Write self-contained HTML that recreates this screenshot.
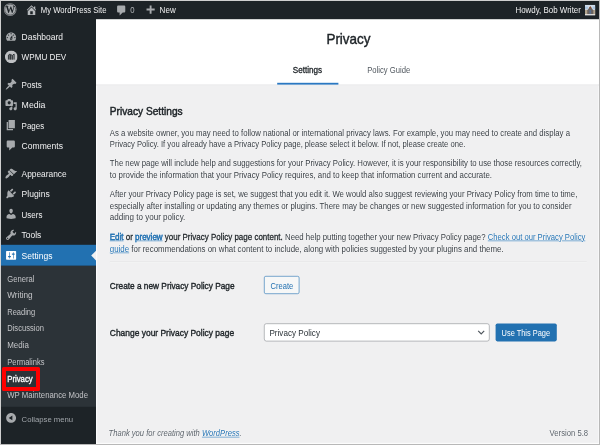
<!DOCTYPE html>
<html lang="en">
<head>
<meta charset="utf-8">
<title>Privacy ‹ My WordPress Site — WordPress</title>
<style>
*{box-sizing:border-box;margin:0;padding:0}
html,body{width:600px;height:445px;overflow:hidden;background:#f0f0f1}
body{font-family:"Liberation Sans",sans-serif;position:relative}
#wp{position:absolute;left:0;top:0;width:1000px;height:742px;transform:scale(.6);transform-origin:0 0;background:#f0f0f1;color:#3c434a;font-size:13px;overflow:hidden}
#wp div,#wp svg{position:absolute}
.t{position:absolute;white-space:nowrap;line-height:0;transform-origin:0 50%;font-weight:normal;text-decoration:none}
ul,li{list-style:none}
#content{left:0;top:0;width:1000px;height:742px}
#content p .t,#content h2,#content label,#content footer .t{text-shadow:0 0 1.6px #fff,0 0 1.6px #fff}
.t a{color:#2271b1;text-decoration:underline}
.t b{font-weight:normal;-webkit-text-stroke:0.45px;color:#1d2327}
.t b a{color:#2271b1}
#menu{left:0;top:0;width:160px;height:742px;background:#1d2327}
#bar{left:0;top:0;width:1000px;height:32px;background:#1d2327}
#cur{left:0;top:408px;width:160px;height:34.5px;background:#2271b1}
#arr{left:144px;top:417.5px;width:0;height:0;border:8px solid transparent;border-right-color:#f0f0f1}
#sub{left:0;top:442.5px;width:160px;height:235.5px;background:#2c3338}
#head{left:0;top:0;width:1000px;height:142.2px;background:#fff;border-bottom:1px solid #dcdcde}
#ul{left:461.7px;top:137.5px;width:102.8px;height:3.5px;background:#2a78c2}
#hr{left:183px;top:436.2px;width:795px;height:2px;border-top:1px solid #dfdfe1;border-bottom:1px solid #f6f7f7}
#btn1{left:440.3px;top:459.7px;width:58.4px;height:30.6px;border:1px solid #2271b1;border-radius:3px;background:#f6f7f7}
#btn2{left:826.3px;top:538.7px;width:101.5px;height:30px;border-radius:3px;background:#2271b1}
#se{left:440.3px;top:538.7px;width:375.8px;height:30.5px;border:1px solid #8c8f94;border-radius:4px;background:#fff}
#r1{left:160px;top:142.5px;width:1.6px;height:600px;background:rgba(255,255,255,.75)}
#r2{left:160px;top:738.2px;width:840px;height:1.7px;background:rgba(255,255,255,.8)}
#r3{left:996.6px;top:142.5px;width:1.7px;height:600px;background:rgba(255,255,255,.8)}
#hl{position:absolute;left:2.2px;top:366.5px;width:37.8px;height:24.3px;border:4px solid #f00;border-radius:1.5px;z-index:40}
#frame{position:absolute;left:0;top:0;width:600px;height:445px;border:1px solid #cfcfcf;border-right-color:#b8b8b8;border-bottom-color:#b8b8b8;z-index:50}
</style>
</head>
<body>
<div id="wp">
<div id="content" role="main">
 <div id="head">
  <h1 class="t" id="h1" style="left:543.78px;top:65.33px;font-size:23.92px;color:#1d2327;-webkit-text-stroke:0.72px;transform:scaleX(0.9391);">Privacy</h1>
  <div id="ul"></div>
  <nav>
   <a class="t" id="t1" style="left:488.42px;top:117.17px;font-size:13.91px;color:#1d2327;-webkit-text-stroke:0.50px;transform:scaleX(0.9685);">Settings</a>
   <a class="t" id="t2" style="left:612.08px;top:117.17px;font-size:13.91px;color:#50575e;transform:scaleX(0.9179);">Policy Guide</a>
  </nav>
 </div>
 <div id="r1"></div>
 <div id="r2"></div>
 <div id="r3"></div>
 <h2 class="t" id="h2" style="left:183.29px;top:186.17px;font-size:18.02px;color:#1d2327;-webkit-text-stroke:0.83px;transform:scaleX(0.9399);">Privacy Settings</h2>
 <p>
  <span class="t" id="p0" style="left:182.92px;top:222.17px;font-size:13.91px;color:#343a40;transform:scaleX(0.9334);">As a website owner, you may need to follow national or international privacy laws. For example, you may need to create and display a</span>
  <span class="t" id="p1" style="left:182.92px;top:239.67px;font-size:13.91px;color:#343a40;transform:scaleX(0.9151);">Privacy Policy. If you already have a Privacy Policy page, please select it below. If not, please create one.</span>
 </p>
 <p>
  <span class="t" id="p2" style="left:182.92px;top:272.17px;font-size:13.91px;color:#343a40;transform:scaleX(0.9321);">The new page will include help and suggestions for your Privacy Policy. However, it is your responsibility to use those resources correctly,</span>
  <span class="t" id="p3" style="left:182.92px;top:292.17px;font-size:13.91px;color:#343a40;transform:scaleX(0.9440);">to provide the information that your Privacy Policy requires, and to keep that information current and accurate.</span>
 </p>
 <p>
  <span class="t" id="p4" style="left:182.92px;top:323.83px;font-size:13.91px;color:#343a40;transform:scaleX(0.9320);">After your Privacy Policy page is set, we suggest that you edit it. We would also suggest reviewing your Privacy Policy from time to time,</span>
  <span class="t" id="p5" style="left:182.92px;top:343.83px;font-size:13.91px;color:#343a40;transform:scaleX(0.9405);">especially after installing or updating any themes or plugins. There may be changes or new suggested information for you to consider</span>
  <span class="t" id="p6" style="left:182.92px;top:362.17px;font-size:13.91px;color:#343a40;transform:scaleX(0.9651);">adding to your policy.</span>
 </p>
 <p>
  <span class="t" id="q1" style="left:182.92px;top:394.67px;font-size:13.91px;color:#343a40;transform:scaleX(0.9564);"><b><a>Edit</a> or <a>preview</a> your Privacy Policy page content.</b></span>
  <span class="t" id="q2" style="left:475.08px;top:394.67px;font-size:13.91px;color:#343a40;transform:scaleX(0.9356);">Need help putting together your new Privacy Policy page?</span>
  <span class="t" id="q3" style="left:812.92px;top:394.67px;font-size:13.91px;color:#343a40;transform:scaleX(0.9181);"><a>Check out our Privacy Policy</a></span>
  <span class="t" id="p7" style="left:182.92px;top:414.67px;font-size:13.91px;color:#343a40;transform:scaleX(0.9465);"><a>guide</a> for recommendations on what content to include, along with policies suggested by your plugins and theme.</span>
 </p>
 <div id="hr"></div>
 <form>
  <label class="t" id="l1" style="left:182.88px;top:476.67px;font-size:14.98px;color:#1d2327;-webkit-text-stroke:0.67px;transform:scaleX(0.9221);">Create a new Privacy Policy Page</label>
  <div id="btn1" class="button"></div>
  <span class="t" id="bt1" style="left:450.92px;top:477.17px;font-size:13.91px;color:#2271b1;transform:scaleX(0.9062);">Create</span>
  <label class="t" id="l2" style="left:182.88px;top:555.00px;font-size:14.98px;color:#1d2327;-webkit-text-stroke:0.67px;transform:scaleX(0.9398);">Change your Privacy Policy page</label>
  <div id="se" class="select"></div>
  <span class="t" id="sel" style="left:449.05px;top:555.00px;font-size:14.98px;color:#2c3338;transform:scaleX(0.9041);">Privacy Policy</span>
  <svg style="left:795px;top:549px" width="14" height="10" viewBox="0 0 14 10"><path d="M2 2.500l5 5 5-5" fill="none" stroke="#50575e" stroke-width="2"/></svg>
  <div id="btn2" class="button"></div>
  <span class="t" id="bt2" style="left:836.25px;top:554.67px;font-size:13.91px;color:#fff;transform:scaleX(0.8886);">Use This Page</span>
 </form>
 <footer>
  <p class="t" id="f1" style="left:180.92px;top:722.17px;font-size:13.91px;color:#596068;font-style:italic;transform:scaleX(0.9104);">Thank you for creating with <a>WordPress</a>.</p>
  <p class="t" id="f2" style="left:916.25px;top:722.17px;font-size:13.91px;color:#596068;transform:scaleX(0.9220);">Version 5.8</p>
 </footer>
</div>
<div id="menu" role="navigation">
 <div id="cur"></div>
 <div id="arr"></div>
 <div id="sub"></div>
 <ul>
  <li><svg style="position:absolute;left:8px;top:50.6667px" width="21" height="21" viewBox="0 0 20 20"><path fill="#a7aaad" fill-rule="evenodd" d="M3.76 16h12.48c1.1-1.37 1.76-3.11 1.76-5 0-4.42-3.58-8-8-8s-8 3.58-8 8c0 1.89.66 3.63 1.76 5zM10 4c.55 0 1 .45 1 1s-.45 1-1 1-1-.45-1-1 .45-1 1-1zM6 6c.55 0 1 .45 1 1s-.45 1-1 1-1-.45-1-1 .45-1 1-1zm8 0c.55 0 1 .45 1 1s-.45 1-1 1-1-.45-1-1 .45-1 1-1zm-5.37 5.55L12 7v6c0 1.1-.9 2-2 2s-2-.9-2-2c0-.57.24-1.08.63-1.45zM4 10c.55 0 1 .45 1 1s-.45 1-1 1-1-.45-1-1 .45-1 1-1zm12 0c.55 0 1 .45 1 1s-.45 1-1 1-1-.45-1-1 .45-1 1-1zm-5 3c0-.55-.45-1-1-1s-1 .45-1 1 .45 1 1 1 1-.45 1-1z"/></svg><a class="t" id="m0" style="left:35.70px;top:61.67px;font-size:15.68px;color:#f0f0f1;transform:scaleX(0.8992);">Dashboard</a></li>
  <li><svg style="left:7.5px;top:83.9px" width="21.6" height="21.6" viewBox="0 0 20 20"><circle cx="10" cy="10" r="9.8" fill="#bfc1c4"/><path d="M5.600 14.200V7.200l2.200-1.500v8.500M8.900 14.200V6.200l2.200 1.500v6.500M12.200 14.200V7.200l2.200-1.500v8.500" fill="none" stroke="#2a2f34" stroke-width="1.500"/></svg><a class="t" id="m1" style="left:35.70px;top:95.00px;font-size:15.68px;color:#f0f0f1;transform:scaleX(0.8636);">WPMU DEV</a></li>
  <li><svg style="position:absolute;left:8px;top:129.667px" width="21" height="21" viewBox="0 0 20 20"><path fill="#a7aaad" fill-rule="evenodd" d="M10.44 3.02l1.82-1.82 6.36 6.35-1.83 1.82c-1.05-.68-2.48-.57-3.41.36l-.75.75c-.92.93-1.04 2.35-.35 3.41l-1.83 1.82-2.41-2.41-2.8 2.79c-.42.42-3.38 2.71-3.8 2.29s1.86-3.39 2.28-3.81l2.79-2.79L4.1 9.36l1.83-1.82c1.05.69 2.48.57 3.4-.36l.75-.75c.93-.92 1.05-2.35.36-3.41z"/></svg><a class="t" id="m2" style="left:35.70px;top:141.67px;font-size:15.68px;color:#f0f0f1;transform:scaleX(0.8530);">Posts</a></li>
  <li><svg style="position:absolute;left:8px;top:163.833px" width="21" height="21" viewBox="0 0 20 20"><path fill="#a7aaad" fill-rule="evenodd" d="M13 11V4c0-.55-.45-1-1-1h-1.67L9 1H5L3.67 3H2c-.55 0-1 .45-1 1v7c0 .55.45 1 1 1h10c.55 0 1-.45 1-1zM7 4.5c1.38 0 2.5 1.12 2.5 2.5S8.38 9.5 7 9.5 4.500 8.38 4.500 7 5.620 4.500 7 4.500zM14 6h5v10.500c0 1.380-1.120 2.500-2.500 2.500S14 17.880 14 16.500s1.120-2.500 2.500-2.500c.17 0 .34.02.5.05V9h-3V6zm-4 8.050V13h2v3.500c0 1.380-1.120 2.500-2.500 2.500S7 17.880 7 16.500 8.120 14 9.500 14c.17 0 .34.02.5.05z"/></svg><a class="t" id="m3" style="left:35.70px;top:175.00px;font-size:15.68px;color:#f0f0f1;transform:scaleX(0.9318);">Media</a></li>
  <li><svg style="position:absolute;left:8px;top:198px" width="21" height="21" viewBox="0 0 20 20"><path fill="#a7aaad" fill-rule="evenodd" d="M6 15V2h10v13H6zm-1 1h8v2H3V5h2v11z"/></svg><a class="t" id="m4" style="left:35.70px;top:210.00px;font-size:15.68px;color:#f0f0f1;transform:scaleX(0.8463);">Pages</a></li>
  <li><svg style="position:absolute;left:8px;top:231.833px" width="21" height="21" viewBox="0 0 20 20"><path fill="#a7aaad" fill-rule="evenodd" d="M5 2h9c1.1 0 2 .9 2 2v7c0 1.1-.9 2-2 2h-2l-5 5v-5H5c-1.1 0-2-.9-2-2V4c0-1.1.9-2 2-2z"/></svg><a class="t" id="m5" style="left:35.70px;top:243.33px;font-size:15.68px;color:#f0f0f1;transform:scaleX(0.9099);">Comments</a></li>
  <li><svg style="position:absolute;left:8px;top:278.833px" width="21" height="21" viewBox="0 0 20 20"><path fill="#a7aaad" fill-rule="evenodd" d="M14.48 11.06L7.41 3.99l1.5-1.5c.5-.56 2.3-.47 3.51.32 1.21.8 1.43 1.28 2.91 2.1 1.18.64 2.45 1.26 4.45.85zm-.71.71L6.7 4.7 4.93 6.47c-.39.39-.39 1.02 0 1.410l1.060 1.060c.39.39.39 1.030 0 1.420-.6.6-1.430 1.110-2.210 1.690-.35.26-.7.53-1.010.84C1.430 14.230.4 16.080 1.400 17.070c.99 1 2.840-.03 4.180-1.360.31-.31.58-.66.85-1.020.57-.78 1.080-1.610 1.690-2.210.39-.39 1.020-.39 1.410 0l1.060 1.060c.39.39 1.020.39 1.410 0z"/></svg><a class="t" id="m6" style="left:35.70px;top:290.00px;font-size:15.68px;color:#f0f0f1;transform:scaleX(0.8885);">Appearance</a></li>
  <li><svg style="position:absolute;left:8px;top:312.167px" width="21" height="21" viewBox="0 0 20 20"><path fill="#a7aaad" fill-rule="evenodd" d="M13.11 4.36L9.87 7.6 8 5.73l3.24-3.240c.35-.34 1.050-.2 1.560.32.52.51.66 1.210.31 1.550zm-8 1.770l.91-1.120 9.010 9.010-1.190.84c-.71.71-2.630 1.160-3.820 1.160H6.140L4.900 17.260c-.59.59-1.540.59-2.120 0-.59-.58-.59-1.530 0-2.120l1.240-1.240v-3.880c0-1.130.4-3.190 1.090-3.890zm7.260 3.970l3.240-3.240c.34-.35 1.040-.21 1.550.31.52.51.66 1.210.31 1.550l-3.240 3.250z"/></svg><a class="t" id="m7" style="left:35.70px;top:323.33px;font-size:15.68px;color:#f0f0f1;transform:scaleX(0.9099);">Plugins</a></li>
  <li><svg style="position:absolute;left:8px;top:346.333px" width="21" height="21" viewBox="0 0 20 20"><path fill="#a7aaad" fill-rule="evenodd" d="M10 9.25c-2.27 0-2.73-3.44-2.73-3.440C7 4.020 7.820 2 9.970 2c2.160 0 2.980 2.020 2.710 3.810 0 0-.41 3.440-2.680 3.440zm0 2.570L12.720 10c2.390 0 4.520 2.330 4.520 4.530v2.490s-3.650 1.130-7.240 1.130c-3.650 0-7.240-1.130-7.240-1.130v-2.490c0-2.250 1.940-4.480 4.470-4.480z"/></svg><a class="t" id="m8" style="left:35.70px;top:358.33px;font-size:15.68px;color:#f0f0f1;transform:scaleX(0.8494);">Users</a></li>
  <li><svg style="position:absolute;left:8px;top:380.5px" width="21" height="21" viewBox="0 0 20 20"><path fill="#a7aaad" fill-rule="evenodd" d="M16.68 9.77c-1.34 1.34-3.300 1.670-4.950.99l-5.410 6.520c-.99.99-2.590.99-3.580 0s-.99-2.590 0-3.570l6.520-5.420c-.68-1.650-.35-3.610.99-4.950 1.280-1.280 3.120-1.620 4.720-1.060l-2.890 2.890 2.820 2.820 2.860-2.870c.53 1.580.18 3.390-1.080 4.650zM3.810 16.210c.4.39 1.040.39 1.430 0 .4-.4.4-1.040 0-1.430-.39-.4-1.030-.4-1.430 0-.39.39-.39 1.030 0 1.430z"/></svg><a class="t" id="m9" style="left:35.70px;top:391.67px;font-size:15.68px;color:#f0f0f1;transform:scaleX(0.8956);">Tools</a></li>
  <li><svg style="position:absolute;left:8px;top:414.667px" width="21" height="21" viewBox="0 0 20 20"><path fill="#fff" fill-rule="evenodd" d="M18 16V4c0-.55-.45-1-1-1H3c-.55 0-1 .45-1 1v12c0 .55.45 1 1 1h14c.55 0 1-.45 1-1zM8 11h1c.55 0 1 .45 1 1s-.45 1-1 1H8v1.500c0 .28-.22.5-.5.5s-.5-.22-.5-.5V13H6c-.55 0-1-.45-1-1s.45-1 1-1h1V5.500c0-.28.22-.5.5-.5s.5.22.5.5V11zm5-2h-1c-.55 0-1-.45-1-1s.45-1 1-1h1V5.500c0-.28.22-.5.5-.5s.5.22.5.5V7h1c.55 0 1 .45 1 1s-.45 1-1 1h-1v5.500c0 .28-.22.5-.5.5s-.5-.22-.5-.5V9z"/></svg><a class="t" id="m10" style="left:35.70px;top:426.67px;font-size:15.68px;color:#fff;transform:scaleX(0.9082);">Settings</a>
   <ul>
    <li><a class="t" id="s0" style="left:12.08px;top:464.67px;font-size:13.91px;color:#c3c4c7;transform:scaleX(0.9161);">General</a></li>
    <li><a class="t" id="s1" style="left:12.08px;top:492.17px;font-size:13.91px;color:#c3c4c7;transform:scaleX(0.9880);">Writing</a></li>
    <li><a class="t" id="s2" style="left:12.08px;top:519.67px;font-size:13.91px;color:#c3c4c7;transform:scaleX(0.9007);">Reading</a></li>
    <li><a class="t" id="s3" style="left:12.08px;top:547.17px;font-size:13.91px;color:#c3c4c7;transform:scaleX(0.9096);">Discussion</a></li>
    <li><a class="t" id="s4" style="left:12.08px;top:574.67px;font-size:13.91px;color:#c3c4c7;transform:scaleX(0.9545);">Media</a></li>
    <li><a class="t" id="s5" style="left:12.08px;top:603.83px;font-size:13.91px;color:#c3c4c7;transform:scaleX(0.9014);">Permalinks</a></li>
    <li><a class="t" id="s6" style="left:12.08px;top:632.17px;font-size:13.91px;color:#fff;-webkit-text-stroke:0.50px;transform:scaleX(0.9322);">Privacy</a></li>
    <li><a class="t" id="s7" style="left:12.08px;top:658.83px;font-size:13.91px;color:#c3c4c7;transform:scaleX(0.9333);">WP Maintenance Mode</a></li>
   </ul>
  </li>
  <li><svg style="position:absolute;left:8px;top:686.167px" width="21" height="21" viewBox="0 0 20 20"><path fill="#a7aaad" fill-rule="evenodd" d="M10 2.160c4.330 0 7.840 3.510 7.840 7.840s-3.510 7.840-7.840 7.840S2.160 14.330 2.160 10 5.670 2.160 10 2.160zm2 11.720V6.120L6.180 9.970z"/></svg><span class="t" id="col" style="left:35.77px;top:699.33px;font-size:13.26px;color:#a0a5aa;transform:scaleX(0.9725);">Collapse menu</span></li>
 </ul>
</div>
<div id="bar" role="toolbar">
 <svg style="left:6.3px;top:5.2px" width="22" height="22" viewBox="0 0 22 22"><circle cx="11" cy="11" r="10.6" fill="#a7aaad"/><circle cx="11" cy="11" r="9.2" fill="none" stroke="#1d2327" stroke-width="0.9"/><text x="11" y="16.600" text-anchor="middle" font-family="Liberation Serif,serif" font-weight="bold" font-size="16" fill="#1d2327">W</text></svg>
 <svg style="position:absolute;left:41.5px;top:5.5px" width="21" height="21" viewBox="0 0 20 20"><path fill="#b8bbbe" fill-rule="evenodd" d="M16 8.500l1.530 1.530-1.060 1.060L10 4.620l-6.470 6.470-1.060-1.060L10 2.500l4 4v-2h2v4zm-6-2.460l6 5.990V18H4v-5.970zM12 17v-5H8v5h4z"/></svg><a class="t" id="b1" style="left:67.58px;top:17.17px;font-size:13.91px;color:#f0f0f1;transform:scaleX(0.9221);">My WordPress Site</a>
 <svg style="position:absolute;left:191.5px;top:6.5px" width="21" height="21" viewBox="0 0 20 20"><path fill="#a7aaad" fill-rule="evenodd" d="M5 2h9c1.1 0 2 .9 2 2v7c0 1.1-.9 2-2 2h-2l-5 5v-5H5c-1.1 0-2-.9-2-2V4c0-1.1.9-2 2-2z"/></svg><span class="t" id="b2" style="left:217.25px;top:17.17px;font-size:13.91px;color:#b0b3b6;transform:scaleX(0.9268);">0</span>
 <svg style="position:absolute;left:239.5px;top:6.5px" width="21" height="21" viewBox="0 0 20 20"><path fill="#a7aaad" fill-rule="evenodd" d="M17 7v3h-5v5H9v-5H4V7h5V2h3v5h5z"/></svg><a class="t" id="b3" style="left:265.75px;top:17.17px;font-size:13.91px;color:#f0f0f1;transform:scaleX(0.9643);">New</a>
 <a class="t" id="b4" style="left:858.75px;top:17.17px;font-size:13.91px;color:#f0f0f1;transform:scaleX(0.9523);">Howdy, Bob Writer</a><svg style="left:974.5px;top:8px" width="17.7" height="17.7" viewBox="0 0 18 18"><rect width="18" height="18" fill="#cfdcea"/><rect y="3" width="5" height="4" fill="#a9c4e0"/><rect x="13" y="3" width="5" height="4" fill="#a9c4e0"/><rect y="8.500" width="18" height="8" fill="#b3a58e"/><path d="M9 2.500L3.800 9.500V16h10.400V9.500z" fill="#6a6360"/><path d="M9 2.500L6.600 5.800h4.800z" fill="#8d4b2c"/><rect x="7.600" y="8.500" width="2.800" height="7.500" fill="#566f8f"/><rect y="16" width="18" height="2" fill="#ecebe8"/></svg>
</div>
</div>
<div id="hl"></div>
<div id="frame"></div>
</body>
</html>
